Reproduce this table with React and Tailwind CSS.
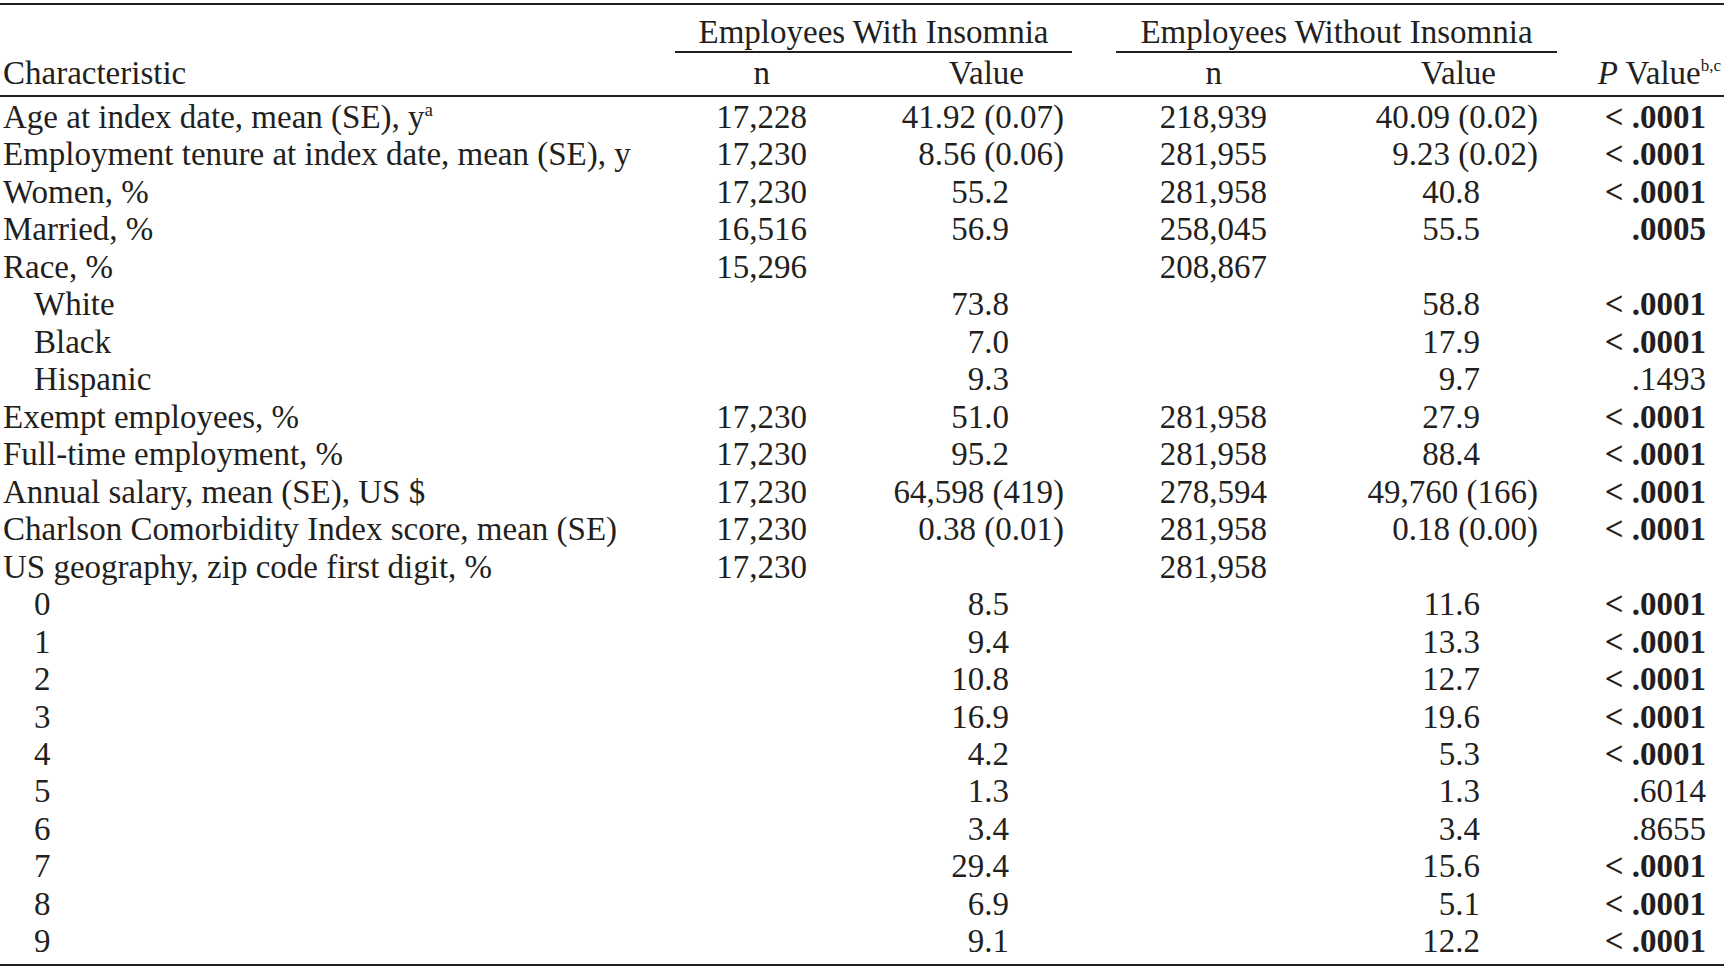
import React from 'react';

const rows = [
  { label: <>Age at index date, mean (SE), y<sup className="text-[19px] relative -top-[12px]">a</sup></>, n1: '17,228', v1: '41.92 (0.07)', n2: '218,939', v2: '40.09 (0.02)', p: '< .0001', bold: true },
  { label: 'Employment tenure at index date, mean (SE), y', n1: '17,230', v1: '8.56 (0.06)', n2: '281,955', v2: '9.23 (0.02)', p: '< .0001', bold: true },
  { label: 'Women, %', n1: '17,230', v1: '55.2', n2: '281,958', v2: '40.8', p: '< .0001', bold: true },
  { label: 'Married, %', n1: '16,516', v1: '56.9', n2: '258,045', v2: '55.5', p: '.0005', bold: true },
  { label: 'Race, %', n1: '15,296', n2: '208,867' },
  { label: 'White', sub: true, v1: '73.8', v2: '58.8', p: '< .0001', bold: true },
  { label: 'Black', sub: true, v1: '7.0', v2: '17.9', p: '< .0001', bold: true },
  { label: 'Hispanic', sub: true, v1: '9.3', v2: '9.7', p: '.1493' },
  { label: 'Exempt employees, %', n1: '17,230', v1: '51.0', n2: '281,958', v2: '27.9', p: '< .0001', bold: true },
  { label: 'Full-time employment, %', n1: '17,230', v1: '95.2', n2: '281,958', v2: '88.4', p: '< .0001', bold: true },
  { label: 'Annual salary, mean (SE), US $', n1: '17,230', v1: '64,598 (419)', n2: '278,594', v2: '49,760 (166)', p: '< .0001', bold: true },
  { label: 'Charlson Comorbidity Index score, mean (SE)', n1: '17,230', v1: '0.38 (0.01)', n2: '281,958', v2: '0.18 (0.00)', p: '< .0001', bold: true },
  { label: 'US geography, zip code first digit, %', n1: '17,230', n2: '281,958' },
  { label: '0', sub: true, v1: '8.5', v2: '11.6', p: '< .0001', bold: true },
  { label: '1', sub: true, v1: '9.4', v2: '13.3', p: '< .0001', bold: true },
  { label: '2', sub: true, v1: '10.8', v2: '12.7', p: '< .0001', bold: true },
  { label: '3', sub: true, v1: '16.9', v2: '19.6', p: '< .0001', bold: true },
  { label: '4', sub: true, v1: '4.2', v2: '5.3', p: '< .0001', bold: true },
  { label: '5', sub: true, v1: '1.3', v2: '1.3', p: '.6014' },
  { label: '6', sub: true, v1: '3.4', v2: '3.4', p: '.8655' },
  { label: '7', sub: true, v1: '29.4', v2: '15.6', p: '< .0001', bold: true },
  { label: '8', sub: true, v1: '6.9', v2: '5.1', p: '< .0001', bold: true },
  { label: '9', sub: true, v1: '9.1', v2: '12.2', p: '< .0001', bold: true },
];

const cols = 'grid grid-cols-[660px_147px_257px_203px_271px_186px]';

export default function App() {
  return (
    <div className="bg-white min-h-[970px] pt-[3px] font-['Liberation_Serif','Times_New_Roman',serif] text-[33px] text-[#231f20]">
      <div className="w-[1724px] border-t-2 border-b-2 border-[#231f20]">
        {/* header */}
        <div className={`${cols} border-b-2 border-[#231f20]`}>
          <div className="col-start-2 col-span-2 h-[48px] ml-[15px] mr-[-8px] pt-[9px] leading-[37px] text-center border-b-2 border-[#231f20]">
            Employees With Insomnia
          </div>
          <div className="col-start-4 col-span-2 h-[48px] ml-[52px] mr-[-19px] pt-[9px] leading-[37px] text-center border-b-2 border-[#231f20]">
            Employees Without Insomnia
          </div>
          <div className="col-start-1 h-[42px] pt-[2px] pl-[3px] leading-[37px]">Characteristic</div>
          <div className="h-[42px] pt-[2px] pr-[37px] leading-[37px] text-right">n</div>
          <div className="h-[42px] pt-[2px] pr-[40px] leading-[37px] text-right">Value</div>
          <div className="h-[42px] pt-[2px] pr-[45px] leading-[37px] text-right">n</div>
          <div className="h-[42px] pt-[2px] pr-[42px] leading-[37px] text-right">Value</div>
          <div className="h-[42px] pt-[2px] pr-[3px] leading-[37px] text-right whitespace-nowrap">
            <i>P</i> Value<sup className="text-[17px] relative -top-[13px]">b,c</sup>
          </div>
        </div>

        {/* body */}
        <div className="pt-[2px] pb-[3px]">
          {rows.map((r, i) => {
            const se1 = r.v1 && r.v1.includes('(');
            const se2 = r.v2 && r.v2.includes('(');
            return (
              <div key={i} className={`${cols} h-[37.47px] leading-[37.47px] whitespace-nowrap`}>
                <div className={r.sub ? 'pl-[34px]' : 'pl-[3px]'}>{r.label}</div>
                <div className="text-right">{r.n1}</div>
                <div className={`text-right ${se1 ? '' : 'pr-[55px]'}`}>{r.v1}</div>
                <div className="text-right">{r.n2}</div>
                <div className={`text-right ${se2 ? '' : 'pr-[58px]'}`}>{r.v2}</div>
                <div className={`text-right pr-[18px] ${r.bold ? 'font-bold' : ''}`}>{r.p}</div>
              </div>
            );
          })}
        </div>
      </div>
    </div>
  );
}
